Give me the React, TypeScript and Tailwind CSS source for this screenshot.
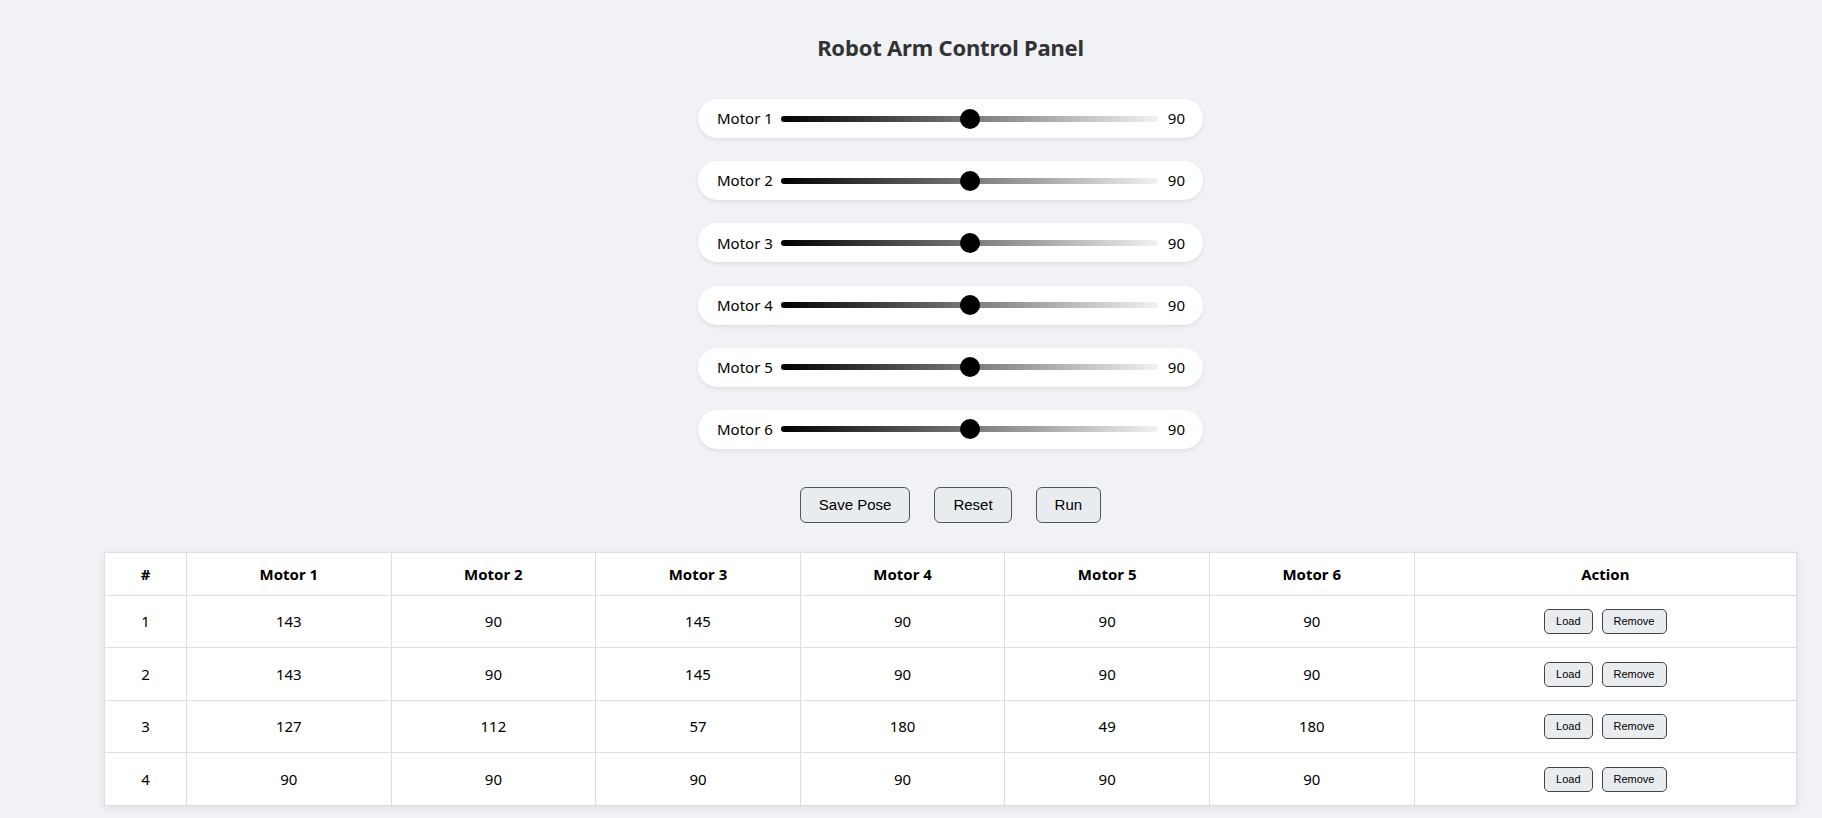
import { FC } from "react"

const font = { fontFamily: '"Segoe UI", "Noto Sans", "Open Sans", sans-serif' }

const motors = [1, 2, 3, 4, 5, 6]

const poses = [
  [143, 90, 145, 90, 90, 90],
  [143, 90, 145, 90, 90, 90],
  [127, 112, 57, 180, 49, 180],
  [90, 90, 90, 90, 90, 90],
]

type MotorSliderProps = {
  id: number
  value: number
}

const MotorSlider: FC<MotorSliderProps> = ({ id, value }) => (
  <div className="flex items-center h-[39px] w-[505px] rounded-full bg-white pl-[19px] pr-[18px] shadow-[0_2px_4px_rgba(0,0,0,0.08)]">
    <span className="w-[52px] whitespace-nowrap text-[15px] text-black">Motor {id}</span>
    <div className="relative ml-[12px] h-[6px] w-[377px] rounded-full bg-[linear-gradient(to_right,#000,#f2f2f2)]">
      <div
        className="absolute top-1/2 h-[20px] w-[20px] -translate-x-1/2 -translate-y-1/2 rounded-full bg-black"
        style={{ left: `${(value / 180) * 100}%` }}
      />
    </div>
    <span className="ml-auto text-[15px] text-black">{value}</span>
  </div>
)

const BigButton: FC<{ label: string }> = ({ label }) => (
  <button className="h-[36px] rounded-[6px] border border-[#555] bg-[#e9ecef] px-[18px] text-[15px] text-black font-['Liberation_Sans',Arial,sans-serif]">
    {label}
  </button>
)

const SmallButton: FC<{ label: string }> = ({ label }) => (
  <button className="h-[25px] rounded-[5px] border border-[#444] bg-[#e9ecef] px-[11px] text-[11px] font-medium text-black font-['Liberation_Sans',Arial,sans-serif]">
    {label}
  </button>
)

export default function App() {
  return (
    <div className="min-h-[818px] bg-[#f0f2f5] pl-[104px] pr-[25px]" style={font}>
      <h1 className="pt-[27px] text-center text-[22px] font-bold leading-[40px] tracking-[-0.2px] text-[#333]">
        Robot Arm Control Panel
      </h1>
      <div className="mt-[32px] flex flex-col items-center gap-[23.2px]">
        {motors.map((m) => (
          <MotorSlider key={m} id={m} value={90} />
        ))}
      </div>
      <div className="mt-[38px] flex justify-center gap-[24px]">
        <BigButton label="Save Pose" />
        <BigButton label="Reset" />
        <BigButton label="Run" />
      </div>
      <table className="mt-[29px] w-full table-fixed border-collapse bg-white text-center text-[15px] text-black shadow-[0_2px_8px_rgba(0,0,0,0.08)]">
        <colgroup>
          <col className="w-[82px]" />
          {motors.map((m) => (
            <col key={m} className="w-[204.6px]" />
          ))}
          <col />
        </colgroup>
        <thead>
          <tr className="h-[43px]">
            <th className="border border-[#ddd] font-bold">#</th>
            {motors.map((m) => (
              <th key={m} className="border border-[#ddd] font-bold">Motor {m}</th>
            ))}
            <th className="border border-[#ddd] font-bold">Action</th>
          </tr>
        </thead>
        <tbody>
          {poses.map((pose, i) => (
            <tr key={i} className="h-[52.5px]">
              <td className="border border-[#ddd]">{i + 1}</td>
              {pose.map((v, j) => (
                <td key={j} className="border border-[#ddd]">{v}</td>
              ))}
              <td className="border border-[#ddd]">
                <div className="flex justify-center gap-[9px]">
                  <SmallButton label="Load" />
                  <SmallButton label="Remove" />
                </div>
              </td>
            </tr>
          ))}
        </tbody>
      </table>
    </div>
  )
}
